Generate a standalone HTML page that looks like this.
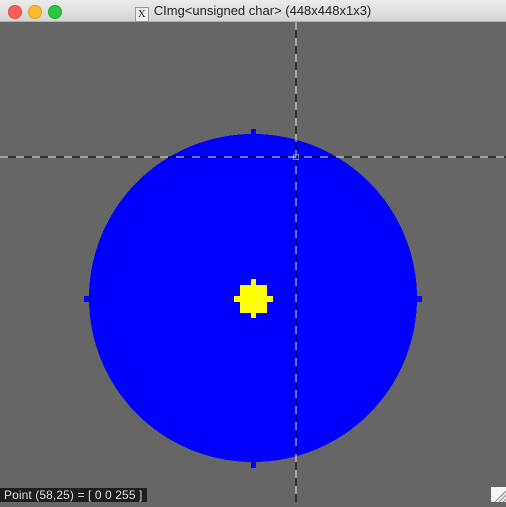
<!DOCTYPE html>
<html><head><style>
html,body{margin:0;padding:0;width:506px;height:502px;overflow:hidden;background:#666;font-family:"Liberation Sans",sans-serif}
.tb{position:absolute;left:0;top:0;width:506px;height:22px;background:linear-gradient(#ebebeb,#d5d5d5);border-bottom:1px solid #b0b0b0;box-sizing:border-box}
.dot{position:absolute;top:5px;width:12px;height:12px;border-radius:50%}
.title{position:absolute;left:0;right:0;top:3px;text-align:center;font-size:13px;color:#222}
.x{display:inline-block;width:12px;height:13px;border:1px solid #999;background:#eee;font-size:11px;line-height:13px;vertical-align:-2px;margin-right:5px;font-family:"Liberation Serif",serif}
.st{position:absolute;left:0;top:488px;width:147px;height:14px;background:#1e1e1e;color:#ddd;font-size:12px;letter-spacing:0.1px;line-height:14px;padding-left:4px;box-sizing:border-box;white-space:pre;overflow:hidden}
.gr{position:absolute;left:491px;top:487px;width:15px;height:15px;background:#f4f4f4}
</style></head><body>
<div class="tb">
<div class="dot" style="left:8px;background:#fc5f57;border:0.5px solid #de4a42"></div>
<div class="dot" style="left:28px;background:#fdbc2e;border:0.5px solid #de9f20"></div>
<div class="dot" style="left:48px;background:#28c840;border:0.5px solid #1aab29"></div>
<div class="title"><span class="x">X</span>CImg&lt;unsigned char&gt; (448x448x1x3)</div>
</div>
<svg style="position:absolute;left:0;top:0" width="506" height="502" shape-rendering="crispEdges">
<circle cx="253" cy="298" r="164" fill="#0000ff"/>
<rect x="251" y="129" width="5" height="6" fill="#00f"/>
<rect x="251" y="461" width="5" height="7" fill="#00f"/>
<rect x="84" y="296" width="6" height="6" fill="#00f"/>
<rect x="416" y="296" width="6" height="6" fill="#00f"/>
<rect x="240" y="285" width="27" height="28" fill="#ff0"/>
<rect x="251" y="279" width="5" height="39" fill="#ff0"/>
<rect x="234" y="296" width="39" height="6" fill="#ff0"/>
<line x1="296" y1="22" x2="296" y2="502" stroke="#000" stroke-width="1"/>
<line x1="296" y1="22" x2="296" y2="502" stroke="#ddd" stroke-width="1" stroke-dasharray="8 8"/>
<line x1="0" y1="157" x2="506" y2="157" stroke="#000" stroke-width="1"/>
<line x1="0" y1="157" x2="506" y2="157" stroke="#ddd" stroke-width="1" stroke-dasharray="8 8"/>
<rect x="293.5" y="154.5" width="5" height="5" fill="none" stroke="#fff" stroke-dasharray="1 1"/>
</svg>
<div class="st">Point (58,25) = [ 0 0 255 ]</div>
<div class="gr"><svg width="15" height="15"><path d="M4 15L15 4M8 15L15 8M12 15L15 12" stroke="#888"/></svg></div>
</body></html>
